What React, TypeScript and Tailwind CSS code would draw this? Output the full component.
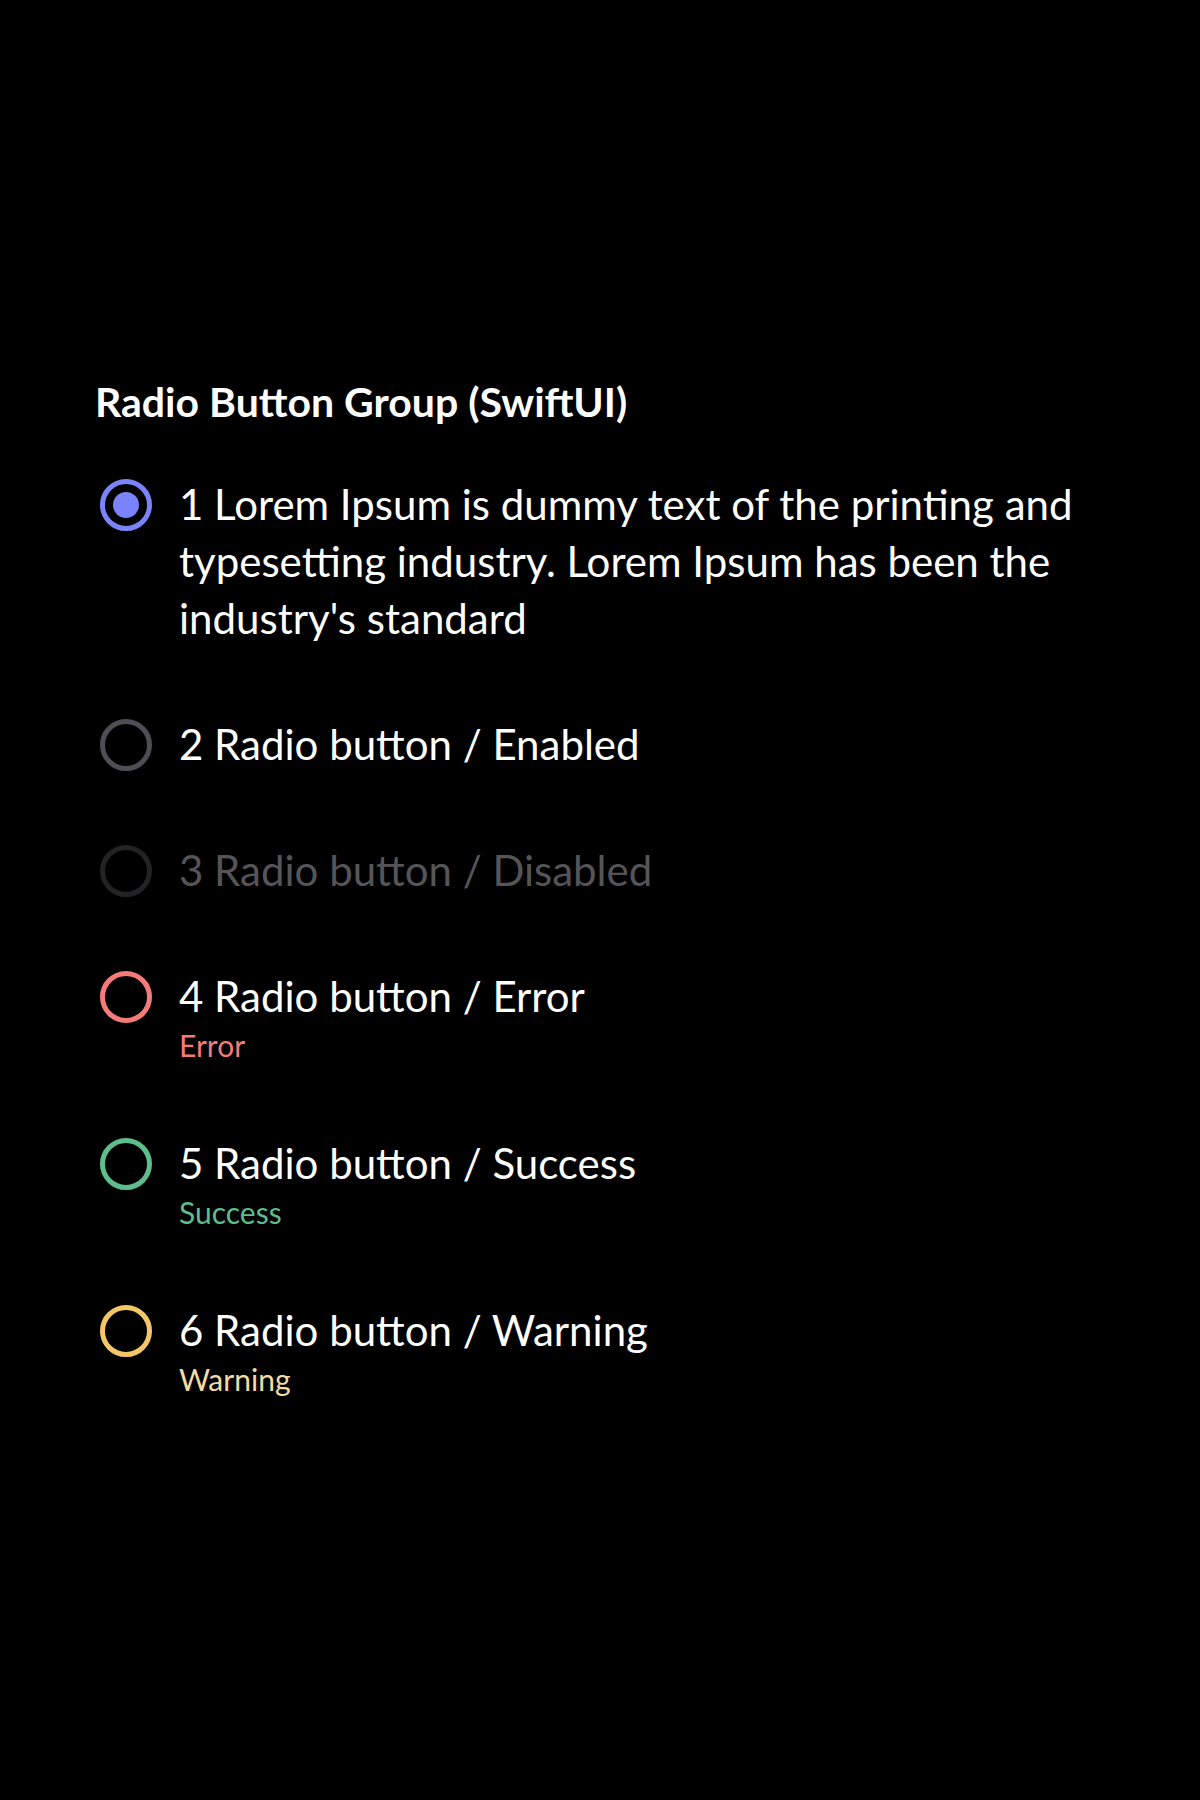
type Status = 'selected' | 'enabled' | 'disabled' | 'error' | 'success' | 'warning';

const ring: Record<Status, string> = {
  selected: 'border-[#7b83fb]',
  enabled: 'border-[#4e4e54]',
  disabled: 'border-[#232325]',
  error: 'border-[#f47b78]',
  success: 'border-[#5dbd8d]',
  warning: 'border-[#f4c766]',
};

const hint: Partial<Record<Status, string>> = {
  error: 'text-[#f47b78]',
  success: 'text-[#5dbd8d]',
  warning: 'text-[#f3dca2]',
};

const items: { status: Status; label: string; note?: string }[] = [
  {
    status: 'selected',
    label:
      "1 Lorem Ipsum is dummy text of the printing and typesetting industry. Lorem Ipsum has been the industry's standard",
  },
  { status: 'enabled', label: '2 Radio button / Enabled' },
  { status: 'disabled', label: '3 Radio button / Disabled' },
  { status: 'error', label: '4 Radio button / Error', note: 'Error' },
  { status: 'success', label: '5 Radio button / Success', note: 'Success' },
  { status: 'warning', label: '6 Radio button / Warning', note: 'Warning' },
];

function Radio({ status }: { status: Status }) {
  return (
    <div className="h-[57px] flex items-center shrink-0">
      <div
        className={`w-[52px] h-[52px] rounded-full border-[5px] flex items-center justify-center ${ring[status]}`}
      >
        {status === 'selected' && <div className="w-[26px] h-[26px] rounded-full bg-[#7b83fb]" />}
      </div>
    </div>
  );
}

export default function App() {
  return (
    <div
      className="min-h-[1800px] bg-black pl-[95px] pt-[379px]"
      style={{ fontFamily: 'Lato, "Noto Sans", sans-serif' }}
    >
      <h1 className="text-[41px] leading-[46px] font-bold text-white">Radio Button Group (SwiftUI)</h1>

      <div className="mt-[51px] ml-[5px] flex flex-col gap-[69px]">
        {items.map((item) => (
          <div key={item.label} className="flex items-start gap-[27px]">
            <Radio status={item.status} />
            <div className="w-[930px]">
              <p
                className={`text-[42px] leading-[57px] ${
                  item.status === 'disabled' ? 'text-[#555557]' : 'text-white'
                }`}
              >
                {item.label}
              </p>
              {item.note && (
                <p className={`text-[30px] leading-[41px] ${hint[item.status]}`}>{item.note}</p>
              )}
            </div>
          </div>
        ))}
      </div>
    </div>
  );
}
